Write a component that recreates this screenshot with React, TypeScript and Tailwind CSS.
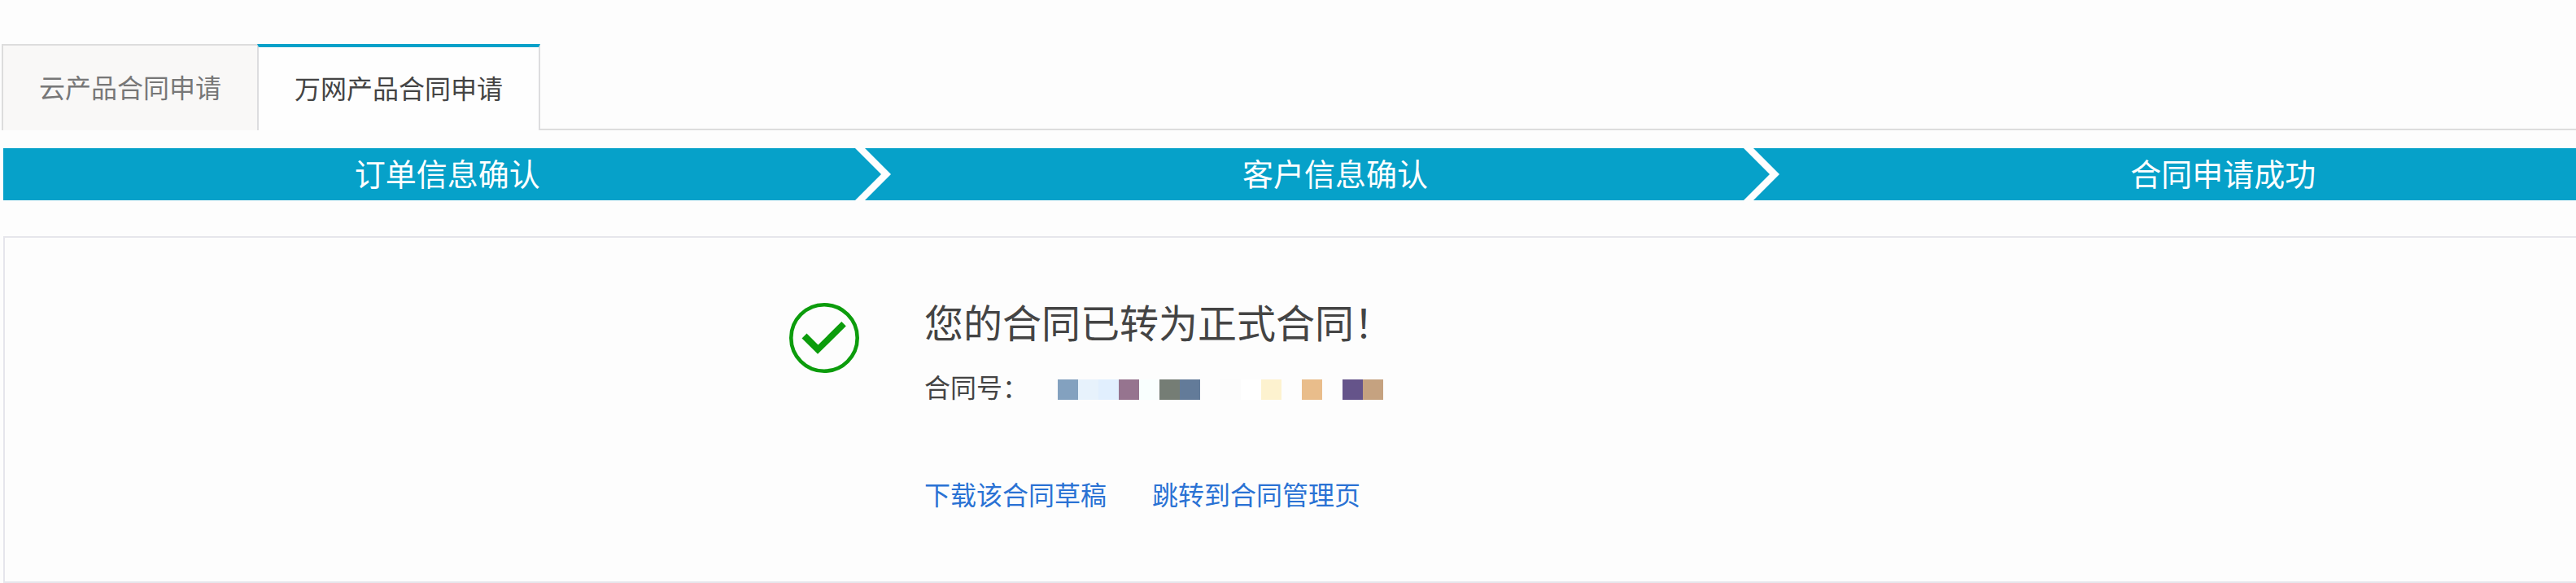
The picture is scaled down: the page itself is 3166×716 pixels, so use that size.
import React, { useState } from 'react';

const TABS = ['云产品合同申请', '万网产品合同申请'];

const STEPS = ['订单信息确认', '客户信息确认', '合同申请成功'];

// Masked contract number, one cell per block
const MASK_CELLS = [
    'bg-[#83a1bf]',
    'bg-[#e7f2fc]',
    'bg-[#e1effe]',
    'bg-[#96748f]',
    'bg-[#f9fffe]',
    'bg-[#757d75]',
    'bg-[#637b99]',
    'bg-[#fdfdfd]',
    'bg-[#fcfcfc]',
    'bg-white',
    'bg-[#fdf2cf]',
    'bg-[#fdfdfd]',
    'bg-[#e9bd8b]',
    'bg-[#fdfdfd]',
    'bg-[#65548a]',
    'bg-[#c5a280]',
];

interface TabButtonProps {
    label: string;
    active: boolean;
    onClick: () => void;
}

const TabButton: React.FC<TabButtonProps> = ({ label, active, onClick }) => (
    <button
        type="button"
        role="tab"
        aria-selected={active}
        onClick={onClick}
        className={`h-full shrink-0 cursor-pointer px-11 pb-1 text-[32px] leading-10 ${
            active
                ? 'border-x-2 border-t-4 border-x-[#dddddf] border-t-[#06a1c9] bg-[#fefefe] text-[#444444]'
                : 'border-t-2 border-l-2 border-[#dddddd] bg-[#f9f8f7] text-[#777777]'
        }`}
    >
        {label}
    </button>
);

const StepArrow: React.FC = () => (
    <svg className="h-16 w-11 shrink-0" viewBox="0 0 44 64" fill="none" aria-hidden="true">
        <path d="M0 0H12L44 32L12 64H0L32 32Z" fill="#fefefe" />
    </svg>
);

const SuccessIcon: React.FC = () => (
    <svg className="mt-20 h-[86px] w-[86px] shrink-0" viewBox="0 0 86 86" fill="none" aria-hidden="true">
        <circle cx="43" cy="43" r="40.7" stroke="#0c9c0c" strokeWidth="4.6" />
        <path d="M15.5 43.5L21.5 37.5L35.5 51.5L64.3 23L69.8 28.5L35 62.8Z" fill="#0c9c0c" />
    </svg>
);

const App: React.FC = () => {
    const [activeTab, setActiveTab] = useState(1);

    return (
        <div className="min-h-screen overflow-hidden bg-[#fdfdfd] pt-[54px] font-['Noto_Sans_CJK_SC',sans-serif] text-[#444444]">
            <div role="tablist" className="flex h-[106px] pl-0.5">
                {TABS.map((label, index) => (
                    <TabButton
                        key={label}
                        label={label}
                        active={index === activeTab}
                        onClick={() => setActiveTab(index)}
                    />
                ))}
                <div className="flex-1 border-b-2 border-[#dddddd]" />
            </div>

            {/* The content runs past the right edge of the window */}
            <main className="ml-1 w-[calc(100%+108px)] pt-[22px]">
                <ol className="flex h-16 bg-[#06a1c9]">
                    {STEPS.map((step, index) => (
                        <li key={step} className="flex flex-1 items-center text-[38px] leading-15 text-white">
                            <span className="flex-1 pb-1 pl-11 text-center">{step}</span>
                            {index < STEPS.length - 1 ? <StepArrow /> : <span className="w-11" />}
                        </li>
                    ))}
                </ol>

                <section className="mt-11 flex h-[426px] border-2 border-[#e6e6ec] pl-[964px]">
                    <SuccessIcon />
                    <div className="ml-20 pt-[70px]">
                        <h1 className="text-[48px] leading-16">您的合同已转为正式合同！</h1>
                        <div className="mt-6 flex h-12 text-[32px] leading-12">
                            <span className="w-[164px]">合同号：</span>
                            <span className="flex pt-4" aria-hidden="true">
                                {MASK_CELLS.map((color, index) => (
                                    <span key={index} className={`h-[25px] w-[25px] ${color}`} />
                                ))}
                            </span>
                        </div>
                        <div className="mt-[84px] flex gap-14 text-[32px] leading-12 text-[#2a72d4]">
                            <a href="#download">下载该合同草稿</a>
                            <a href="#contracts">跳转到合同管理页</a>
                        </div>
                    </div>
                </section>
            </main>
        </div>
    );
};

export default App;
